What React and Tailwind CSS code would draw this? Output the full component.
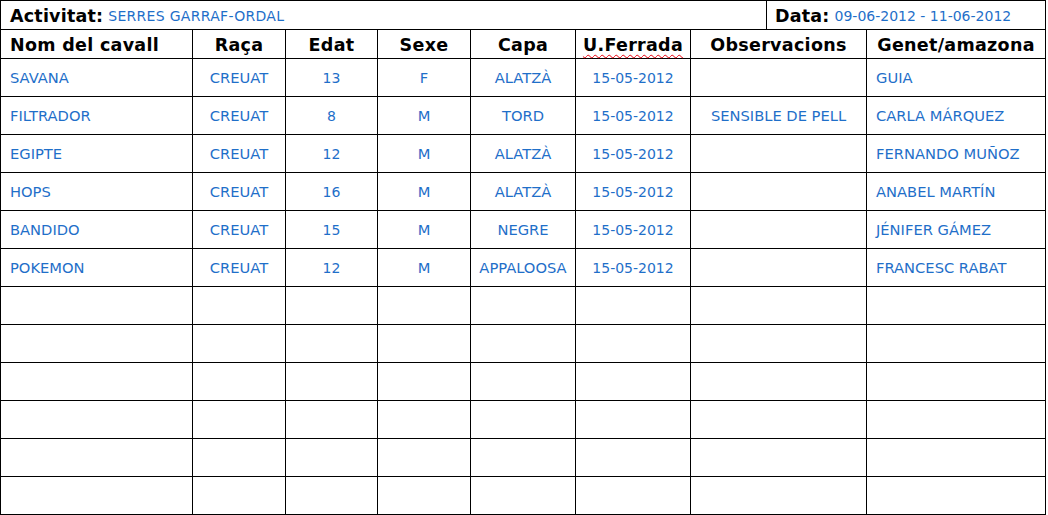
import React from 'react';

const HEADERS = ['Nom del cavall', 'Raça', 'Edat', 'Sexe', 'Capa', 'U.Ferrada', 'Observacions', 'Genet/amazona'];

const ROWS = [
  ['SAVANA', 'CREUAT', '13', 'F', 'ALATZÀ', '15-05-2012', '', 'GUIA'],
  ['FILTRADOR', 'CREUAT', '8', 'M', 'TORD', '15-05-2012', 'SENSIBLE DE PELL', 'CARLA MÁRQUEZ'],
  ['EGIPTE', 'CREUAT', '12', 'M', 'ALATZÀ', '15-05-2012', '', 'FERNANDO MUÑOZ'],
  ['HOPS', 'CREUAT', '16', 'M', 'ALATZÀ', '15-05-2012', '', 'ANABEL MARTÍN'],
  ['BANDIDO', 'CREUAT', '15', 'M', 'NEGRE', '15-05-2012', '', 'JÉNIFER GÁMEZ'],
  ['POKEMON', 'CREUAT', '12', 'M', 'APPALOOSA', '15-05-2012', '', 'FRANCESC RABAT'],
  ['', '', '', '', '', '', '', ''],
  ['', '', '', '', '', '', '', ''],
  ['', '', '', '', '', '', '', ''],
  ['', '', '', '', '', '', '', ''],
  ['', '', '', '', '', '', '', ''],
  ['', '', '', '', '', '', '', ''],
];

const font = { fontFamily: '"DejaVu Sans", Verdana, sans-serif' };

export default function App() {
  return (
    <div className="w-[1048px] h-[515px] bg-white" style={font}>
      <div className="w-[1046px] border-l border-t border-black">
        {/* activity / date row */}
        <div className="flex h-[29px] border-b border-black">
          <div className="w-[766px] border-r border-black flex items-center pl-[9px] pt-[3px] gap-[5px]">
            <span className="text-[17.5px] font-bold text-black tracking-[0.2px]">Activitat:</span>
            <span className="text-[14px] text-[#1f6fc9] tracking-[0.3px]">SERRES GARRAF-ORDAL</span>
          </div>
          <div className="w-[279px] border-r border-black flex items-center pl-[8px] pt-[3px] gap-[5px]">
            <span className="text-[17.5px] font-bold text-black tracking-[0.2px]">Data:</span>
            <span className="text-[14px] text-[#1f6fc9]">09-06-2012 - 11-06-2012</span>
          </div>
        </div>

        {/* header row */}
        <div className="grid grid-cols-[192px_93px_92px_93px_105px_115px_176px_179px] h-[29px]">
          {HEADERS.map((h, i) => (
            <div
              key={h}
              className={`border-r border-b border-black flex items-center pt-[2px] text-[17.5px] font-bold text-black tracking-[0.3px] whitespace-nowrap ${i === 0 ? 'pl-[9px]' : 'justify-center'}`}
            >
              {h === 'U.Ferrada' ? (
                <span className="underline decoration-wavy decoration-red-600 decoration-1 underline-offset-[3px]">{h}</span>
              ) : h}
            </div>
          ))}
        </div>

        {/* data rows */}
        {ROWS.map((row, r) => (
          <div key={r} className="grid grid-cols-[192px_93px_92px_93px_105px_115px_176px_179px] h-[38px]">
            {row.map((v, i) => (
              <div
                key={i}
                className={`border-r border-b border-black flex items-center pt-[2px] text-[#1f6fc9] whitespace-nowrap ${i === 5 || i === 2 ? 'text-[14px]' : 'text-[14.7px]'} ${i === 0 || i === 7 ? 'pl-[9px]' : 'justify-center'}`}
              >
                {v}
              </div>
            ))}
          </div>
        ))}
      </div>
    </div>
  );
}
